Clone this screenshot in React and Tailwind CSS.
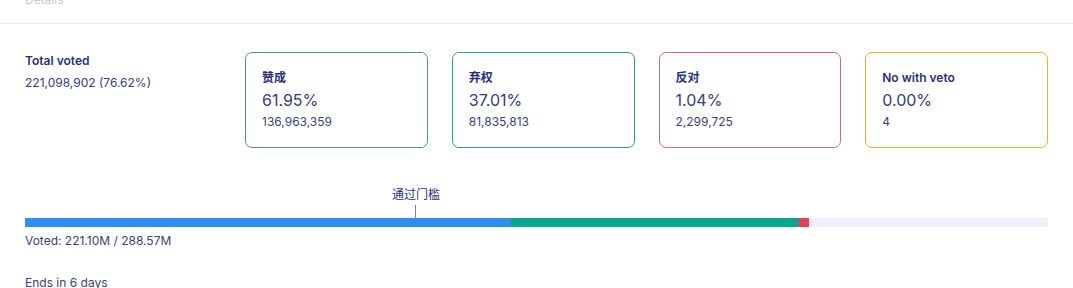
const cards = [
  { label: '赞成', pct: '61.95%', amount: '136,963,359', border: 'border-[#4f8fa0]' },
  { label: '弃权', pct: '37.01%', amount: '81,835,813', border: 'border-[#22a58a]' },
  { label: '反对', pct: '1.04%', amount: '2,299,725', border: 'border-[#d86a75]' },
  { label: 'No with veto', pct: '0.00%', amount: '4', border: 'border-[#e2b62a]' },
];

export default function App() {
  return (
    <div className="w-[1073px] h-[288px] overflow-hidden bg-white text-[#2a2f7c]" style={{ fontFamily: 'Inter, "Noto Sans CJK SC", sans-serif' }}>
      {/* cut-off header */}
      <div className="h-[24px] overflow-hidden border-b border-[#ececf0]">
        <div className="-mt-[9px] pl-[25px] text-[12px] text-[#c8c8d0]">Details</div>
      </div>

      <div className="px-[25px] pt-[28px]">
        <div className="flex">
          <div className="w-[220px] shrink-0 pt-[1px]">
            <div className="text-[12px] font-semibold leading-[16px]">Total voted</div>
            <div className="text-[12px] leading-[16px] mt-[6px] text-[#363b78]">221,098,902 (76.62%)</div>
          </div>
          <div className="flex-1 grid grid-cols-4 gap-[24px]">
            {cards.map((c) => (
              <div key={c.label} className={`h-[96px] rounded-[7px] border ${c.border} pl-[16px] pt-[17px]`}>
                <div className="text-[12px] font-semibold leading-[16px]">{c.label}</div>
                <div className="text-[16px] leading-[20px] mt-[4px] text-[#363b7c]">{c.pct}</div>
                <div className="text-[12px] leading-[16px] mt-[4px] text-[#3a3f78]">{c.amount}</div>
              </div>
            ))}
          </div>
        </div>

        {/* threshold */}
        <div className="relative h-[70px]">
          <div className="absolute left-[367px] top-[39px] w-[48px] text-center text-[12px] leading-[16px]">通过门槛</div>
          <div className="absolute left-[390px] top-[57px] h-[13px] w-px bg-[#7c7f98]" />
        </div>

        {/* vote bar */}
        <div className="flex h-[9px] w-full bg-[#f1f0fc]">
          <div className="h-full bg-[#2f8ff0]" style={{ width: '47.46%' }} />
          <div className="h-full bg-[#06a98c]" style={{ width: '28.2%' }} />
          <div className="h-full bg-[#ec3d55]" style={{ width: '0.98%' }} />
        </div>
        <div className="text-[12px] leading-[16px] mt-[6px] text-[#3a3f74]">Voted: 221.10M / 288.57M</div>
        <div className="text-[12px] leading-[16px] mt-[26px] text-[#3a3f74]">Ends in 6 days</div>
      </div>
    </div>
  );
}
